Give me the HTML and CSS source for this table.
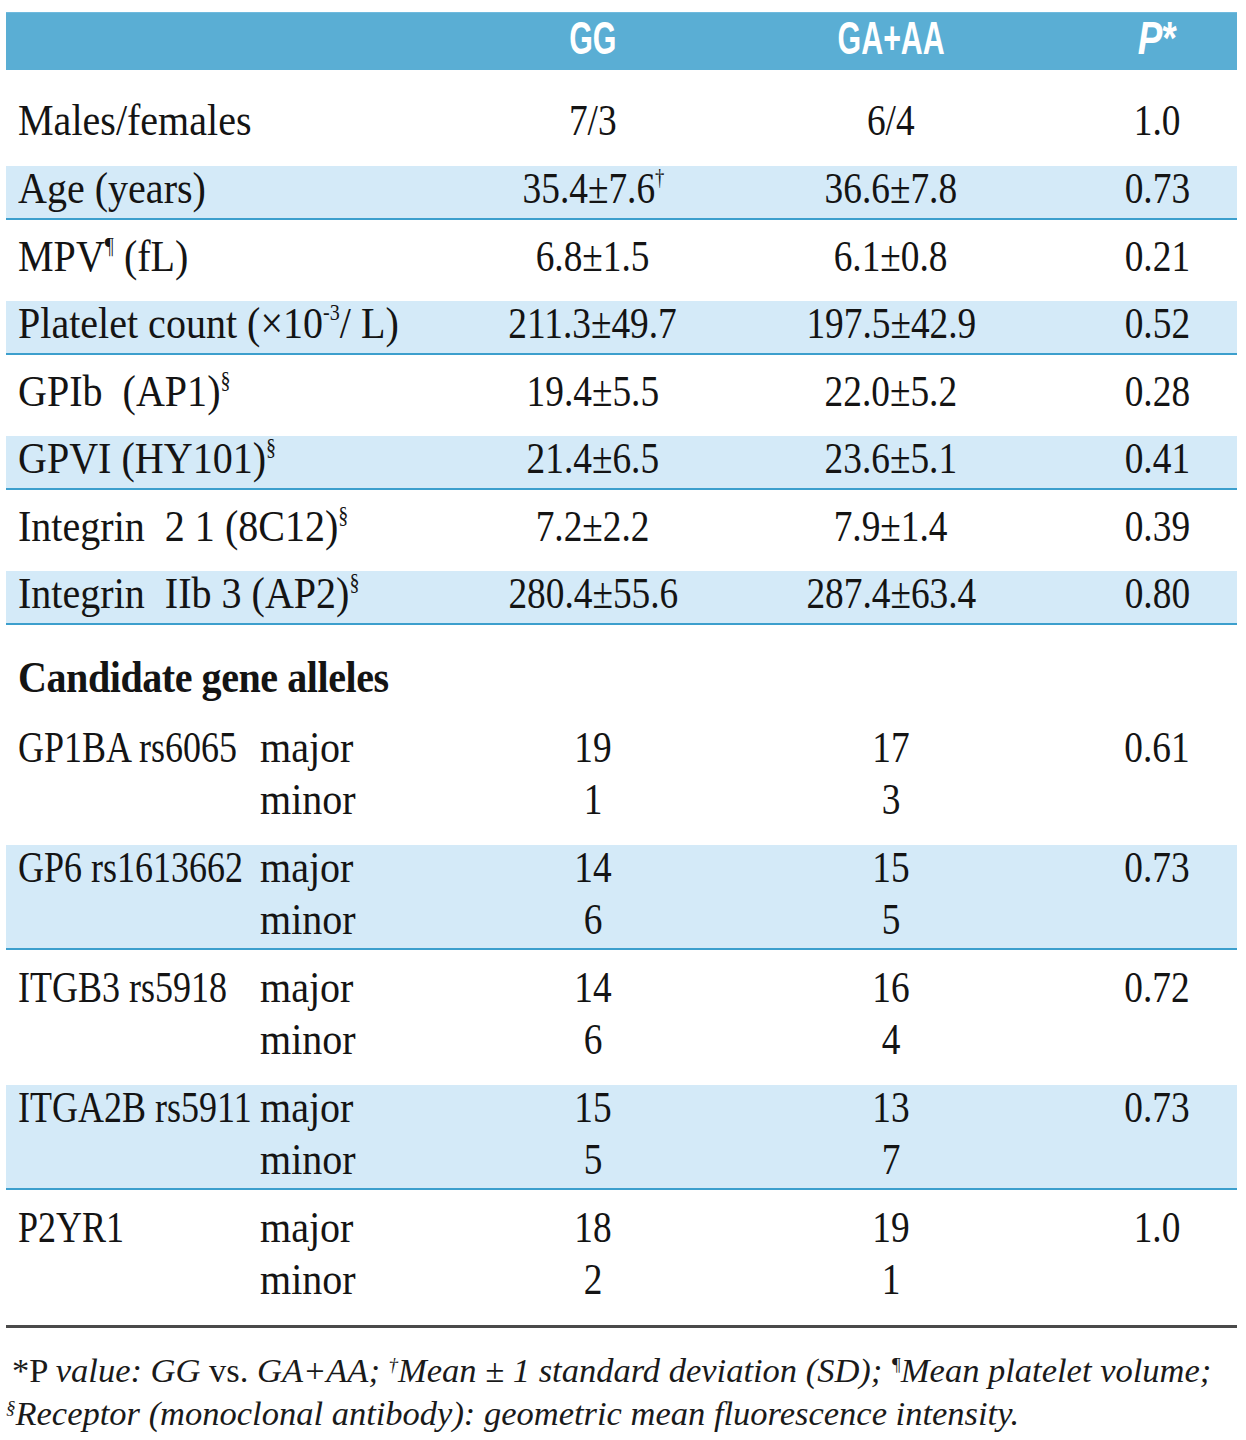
FILE: index.html
```html
<!DOCTYPE html>
<html lang="en">
<head>
<meta charset="utf-8">
<title>Table</title>
<link rel="stylesheet" href="styles.css">
</head>
<body>
<div class="page">
  <div class="tbl">
    <div class="row head">
      <div class="c lab"></div>
      <div class="c val"><span class="hx">GG</span></div>
      <div class="c val"><span class="hx">GA+AA</span></div>
      <div class="c val p"><span class="hx hp"><i>P</i>*</span></div>
    </div>

    <div class="row first">
      <div class="c lab"><span class="tx">Males/females</span></div>
      <div class="c val"><span class="nx">7/3</span></div>
      <div class="c val"><span class="nx">6/4</span></div>
      <div class="c val p"><span class="nx">1.0</span></div>
    </div>
    <div class="row shade">
      <div class="c lab"><span class="tx">Age (years)</span></div>
      <div class="c val"><span class="nx">35.4±7.6<sup class="s">†</sup></span></div>
      <div class="c val"><span class="nx">36.6±7.8</span></div>
      <div class="c val p"><span class="nx">0.73</span></div>
    </div>
    <div class="row">
      <div class="c lab"><span class="tx">MPV<sup class="s">¶</sup> (fL)</span></div>
      <div class="c val"><span class="nx">6.8±1.5</span></div>
      <div class="c val"><span class="nx">6.1±0.8</span></div>
      <div class="c val p"><span class="nx">0.21</span></div>
    </div>
    <div class="row shade">
      <div class="c lab"><span class="tx">Platelet count (×10<sup class="s">-3</sup>/ L)</span></div>
      <div class="c val"><span class="nx">211.3±49.7</span></div>
      <div class="c val"><span class="nx">197.5±42.9</span></div>
      <div class="c val p"><span class="nx">0.52</span></div>
    </div>
    <div class="row">
      <div class="c lab"><span class="tx">GPIb&nbsp; (AP1)<sup class="s">§</sup></span></div>
      <div class="c val"><span class="nx">19.4±5.5</span></div>
      <div class="c val"><span class="nx">22.0±5.2</span></div>
      <div class="c val p"><span class="nx">0.28</span></div>
    </div>
    <div class="row shade">
      <div class="c lab"><span class="tx">GPVI (HY101)<sup class="s">§</sup></span></div>
      <div class="c val"><span class="nx">21.4±6.5</span></div>
      <div class="c val"><span class="nx">23.6±5.1</span></div>
      <div class="c val p"><span class="nx">0.41</span></div>
    </div>
    <div class="row">
      <div class="c lab"><span class="tx">Integrin&nbsp; 2 1 (8C12)<sup class="s">§</sup></span></div>
      <div class="c val"><span class="nx">7.2±2.2</span></div>
      <div class="c val"><span class="nx">7.9±1.4</span></div>
      <div class="c val p"><span class="nx">0.39</span></div>
    </div>
    <div class="row shade">
      <div class="c lab"><span class="tx">Integrin&nbsp; IIb 3 (AP2)<sup class="s">§</sup></span></div>
      <div class="c val"><span class="nx">280.4±55.6</span></div>
      <div class="c val"><span class="nx">287.4±63.4</span></div>
      <div class="c val p"><span class="nx">0.80</span></div>
    </div>

    <div class="row cand">
      <div class="c lab"><span class="tx">Candidate gene alleles</span></div>
    </div>

    <div class="row gene">
      <div class="c lab gl">
        <span class="tx gn">GP1BA rs6065</span><span class="tx">major</span>
        <span></span><span class="tx">minor</span>
      </div>
      <div class="c val gv"><span class="nx">19</span><span class="nx">1</span></div>
      <div class="c val gv"><span class="nx">17</span><span class="nx">3</span></div>
      <div class="c val p gv"><span class="nx">0.61</span></div>
    </div>
    <div class="row gene shade">
      <div class="c lab gl">
        <span class="tx gn">GP6 rs1613662</span><span class="tx">major</span>
        <span></span><span class="tx">minor</span>
      </div>
      <div class="c val gv"><span class="nx">14</span><span class="nx">6</span></div>
      <div class="c val gv"><span class="nx">15</span><span class="nx">5</span></div>
      <div class="c val p gv"><span class="nx">0.73</span></div>
    </div>
    <div class="row gene">
      <div class="c lab gl">
        <span class="tx gn">ITGB3 rs5918</span><span class="tx">major</span>
        <span></span><span class="tx">minor</span>
      </div>
      <div class="c val gv"><span class="nx">14</span><span class="nx">6</span></div>
      <div class="c val gv"><span class="nx">16</span><span class="nx">4</span></div>
      <div class="c val p gv"><span class="nx">0.72</span></div>
    </div>
    <div class="row gene shade">
      <div class="c lab gl">
        <span class="tx gn">ITGA2B rs5911</span><span class="tx">major</span>
        <span></span><span class="tx">minor</span>
      </div>
      <div class="c val gv"><span class="nx">15</span><span class="nx">5</span></div>
      <div class="c val gv"><span class="nx">13</span><span class="nx">7</span></div>
      <div class="c val p gv"><span class="nx">0.73</span></div>
    </div>
    <div class="row gene">
      <div class="c lab gl">
        <span class="tx gn">P2YR1</span><span class="tx">major</span>
        <span></span><span class="tx">minor</span>
      </div>
      <div class="c val gv"><span class="nx">18</span><span class="nx">2</span></div>
      <div class="c val gv"><span class="nx">19</span><span class="nx">1</span></div>
      <div class="c val p gv"><span class="nx">1.0</span></div>
    </div>
  </div>

  <div class="rule"></div>

  <div class="note">
    <p class="n1">*P <i>value: GG</i> vs. <i>GA+AA; <sup class="ns">†</sup>Mean ± 1 standard deviation (SD); <sup class="ns">¶</sup>Mean platelet volume;</i></p>
    <p class="n2"><i><sup class="ns">§</sup>Receptor (monoclonal antibody): geometric mean fluorescence intensity.</i></p>
  </div>
</div>
</body>
</html>
```

FILE: styles.css
```css
* {
  box-sizing: border-box;
}

body {
  margin: 0;
  background: #ffffff;
  color: #141414;
  font-family: "Liberation Serif", "Times New Roman", serif;
}

.page {
  padding: 12px 9px 0 6px;
}

.tbl {
  width: 1231px;
}

.row {
  display: grid;
  grid-template-columns: 437px 300px 296px 198px;
  font-size: 45px;
  line-height: 44px;
  padding: 14px 0 23px;
}

.row.first {
  padding: 28px 0 24px;
}

.row.shade {
  background: #d4eaf8;
  border-bottom: 2px solid #3c9fcd;
  padding: 0 0 8px;
}

.row.head {
  background: #5aaed4;
  color: #ffffff;
  font-family: "Liberation Sans", Arial, sans-serif;
  font-weight: 700;
  font-size: 46px;
  line-height: 50px;
  height: 58px;
  padding: 0;
  border-top: 1px solid #6fbade;
}

.row.cand {
  padding: 30px 0 11px;
  font-weight: 700;
}

.row.gene {
  padding: 15px 0 24px;
}

.row.gene.shade {
  padding: 0 0 7px;
}

.lab {
  padding-left: 12px;
  white-space: nowrap;
}

.val {
  text-align: center;
  white-space: nowrap;
}

.p {
  padding-left: 38px;
}

.tx {
  display: inline-block;
  transform: scaleX(0.89);
  transform-origin: 0 50%;
  white-space: nowrap;
}

.cand .tx {
  transform: scaleX(0.89);
  letter-spacing: -0.5px;
}

.gn {
  transform: scaleX(0.8);
}

.nx {
  display: inline-block;
  transform: scaleX(0.83);
  white-space: nowrap;
}

.hx {
  display: inline-block;
  transform: scaleX(0.66);
}

.hp {
  transform: scaleX(0.8);
}

.s {
  font-size: 0.5em;
  line-height: 0;
  vertical-align: 0.8em;
}

.gl {
  display: grid;
  grid-template-columns: 242px auto;
  grid-auto-rows: 44px;
  row-gap: 8px;
}

.gv {
  display: flex;
  flex-direction: column;
  gap: 8px;
}

.gv .nx {
  height: 44px;
}

.rule {
  width: 1231px;
  height: 3px;
  background: #4a4a4a;
}

.note {
  margin-top: 21px;
  font-size: 34.5px;
  line-height: 43px;
  color: #1a1a1a;
}

.note p {
  margin: 0;
  white-space: nowrap;
}

.n1 {
  padding-left: 6px;
}

.ns {
  font-size: 0.55em;
  line-height: 0;
  vertical-align: 0.6em;
}
```
